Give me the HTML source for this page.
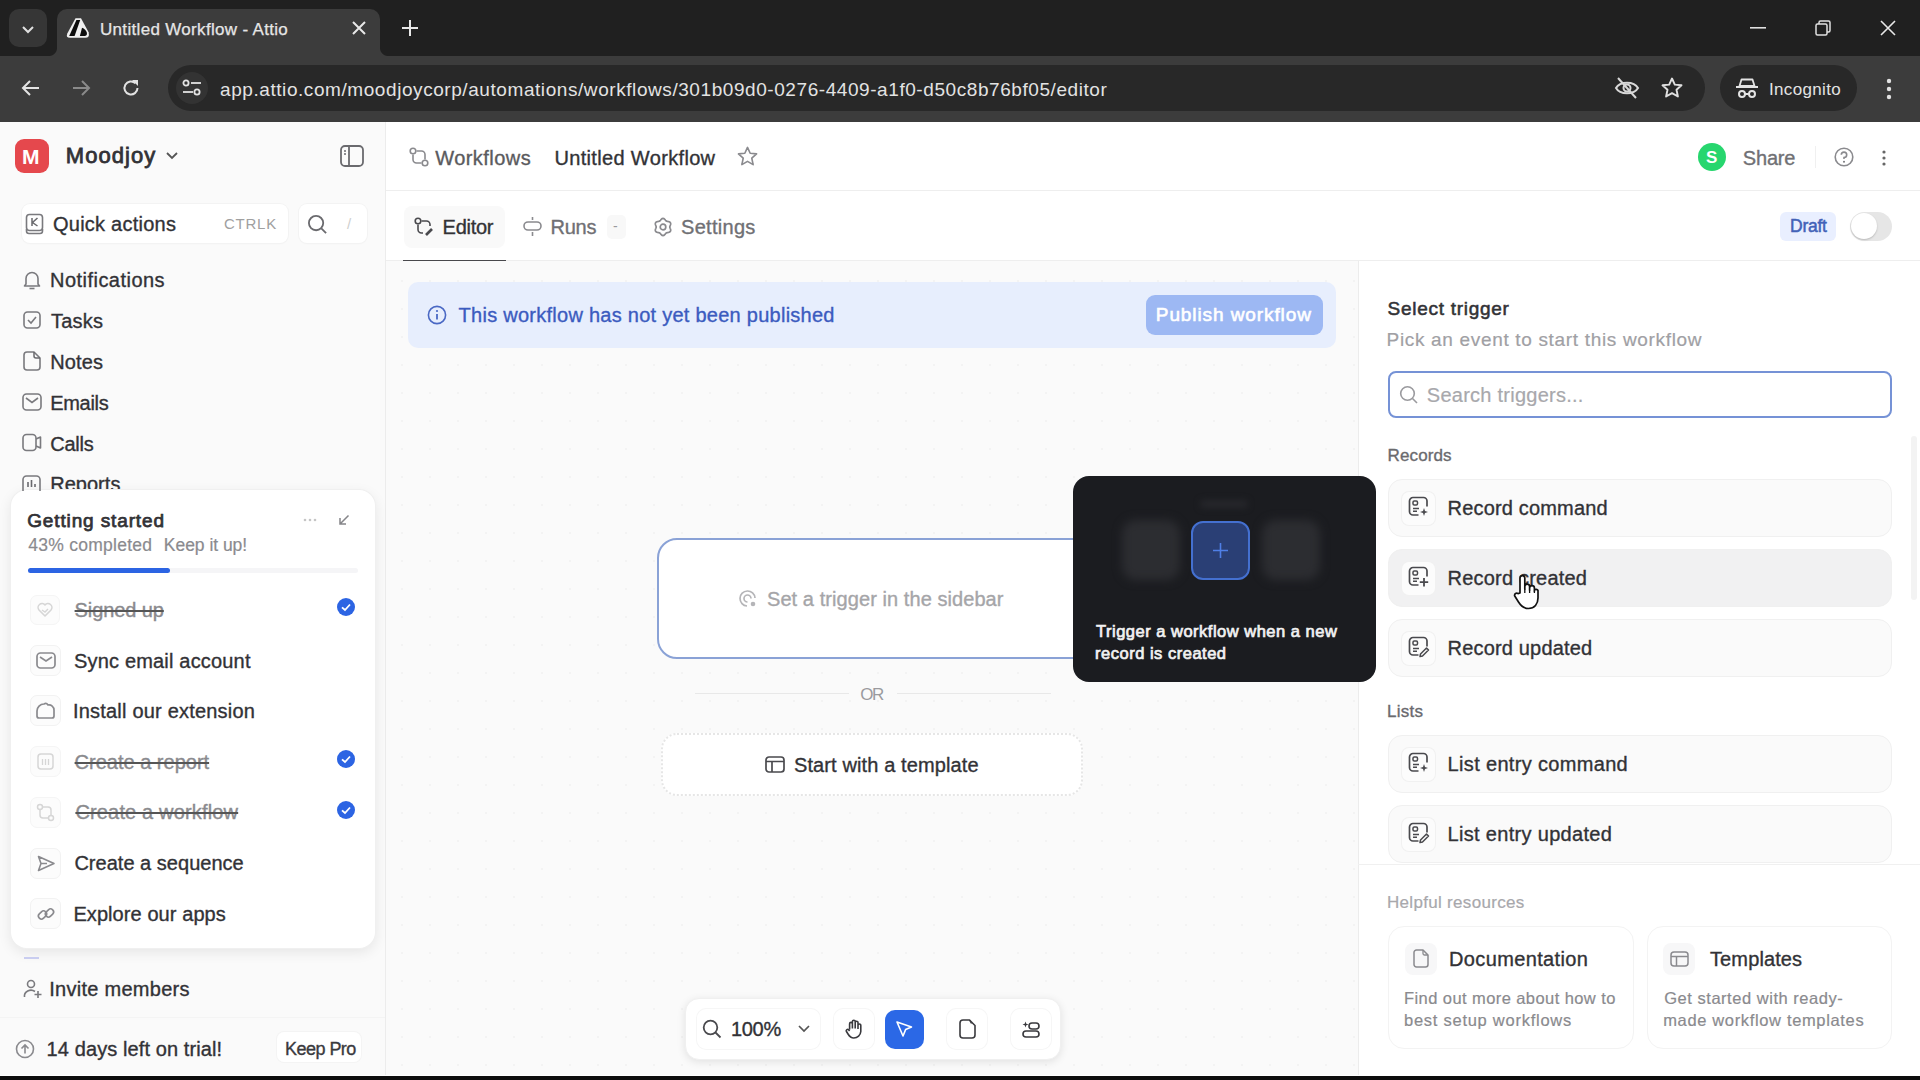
<!DOCTYPE html>
<html><head><meta charset="utf-8">
<style>
*{box-sizing:border-box;margin:0;padding:0}
html,body{width:1920px;height:1080px;overflow:hidden;background:#fff;font-family:"Liberation Sans",sans-serif;color:#323236}
.a{position:absolute}
.t{position:absolute;white-space:nowrap;line-height:1;letter-spacing:0.03em}
.m{-webkit-text-stroke:0.35px currentColor}
.m2{-webkit-text-stroke:0.2px currentColor}
svg{position:absolute;overflow:visible}
</style></head><body>

<!-- ============ BROWSER CHROME ============ -->
<div class="a" style="left:0;top:0;width:1920px;height:56px;background:#202020"></div>
<div class="a" style="left:9px;top:9px;width:38px;height:38px;border-radius:10px;background:#363636"></div>
<div class="a" style="left:57px;top:9px;width:323px;height:48px;border-radius:10px 10px 0 0;background:#3c3c3c"></div>
<div class="a" style="left:49px;top:48px;width:8px;height:8px;background:radial-gradient(circle at 0 0,#202020 7.5px,#3c3c3c 8.5px)"></div>
<div class="a" style="left:380px;top:48px;width:8px;height:8px;background:radial-gradient(circle at 100% 0,#202020 7.5px,#3c3c3c 8.5px)"></div>
<div class="a" style="left:0;top:56px;width:1920px;height:66px;background:#3c3c3c"></div>
<div class="a" style="left:168px;top:65px;width:1537px;height:46px;border-radius:23px;background:#282828"></div>
<div class="a" style="left:1720px;top:65px;width:137px;height:46px;border-radius:23px;background:#282828"></div>
<div class="t" style="left:100.0px;top:21px;font-size:17px;color:#e6e6e6;letter-spacing:0.32px;-webkit-text-stroke:0.25px #e6e6e6">Untitled Workflow - Attio</div>
<div class="t" style="left:220.0px;top:80px;font-size:19px;color:#e3e3e3;letter-spacing:0.57px">app.attio.com/moodjoycorp/automations/workflows/301b09d0-0276-4409-a1f0-d50c8b76bf05/editor</div>
<div class="t" style="left:1769.0px;top:80.5px;font-size:17px;color:#e3e3e3;letter-spacing:0.34px">Incognito</div>


<!-- chrome icons -->
<svg style="left:19px;top:20px" width="18" height="18" viewBox="0 0 18 18"><path d="M4 7 L9 12 L14 7" fill="none" stroke="#e0e0e0" stroke-width="2"/></svg>
<svg style="left:66px;top:17px" width="24" height="22" viewBox="0 0 24 22"><path d="M9.5 1.2 H15 L22.6 15.2 Q24 20.8 19.3 20.8 H4 Q-0.5 20.8 1.3 16.5 Z" fill="#f0f0f0"/><path d="M10.4 3 H14.2 L8.6 18.9 H3.2 Z" fill="#0c0c0c"/><path d="M16 10.8 L13.9 18.9 H19 Q21.5 18.6 20.8 15.5 Q19.8 12.2 16 10.8 Z" fill="#0c0c0c"/></svg>
<svg style="left:352px;top:21px" width="14" height="14" viewBox="0 0 14 14"><path d="M1 1 L13 13 M13 1 L1 13" stroke="#e8e8e8" stroke-width="2"/></svg>
<svg style="left:401px;top:19px" width="18" height="18" viewBox="0 0 18 18"><path d="M9 1 V17 M1 9 H17" stroke="#e8e8e8" stroke-width="2"/></svg>
<svg style="left:1750px;top:27px" width="16" height="2" viewBox="0 0 16 2"><rect width="16" height="1.6" fill="#e0e0e0"/></svg>
<svg style="left:1815px;top:20px" width="16" height="16" viewBox="0 0 16 16"><rect x="1" y="4" width="11" height="11" rx="1.5" fill="none" stroke="#e0e0e0" stroke-width="1.5"/><path d="M4 4 V2.5 A1.5 1.5 0 0 1 5.5 1 H13.5 A1.5 1.5 0 0 1 15 2.5 V10.5 A1.5 1.5 0 0 1 13.5 12 H12" fill="none" stroke="#e0e0e0" stroke-width="1.5"/></svg>
<svg style="left:1880px;top:20px" width="16" height="16" viewBox="0 0 16 16"><path d="M1 1 L15 15 M15 1 L1 15" stroke="#e8e8e8" stroke-width="1.6"/></svg>
<svg style="left:21px;top:79px" width="20" height="18" viewBox="0 0 20 18"><path d="M18 9 H3 M9 2 L2 9 L9 16" fill="none" stroke="#e3e3e3" stroke-width="2"/></svg>
<svg style="left:71px;top:79px" width="20" height="18" viewBox="0 0 20 18"><path d="M2 9 H17 M11 2 L18 9 L11 16" fill="none" stroke="#8a8a8a" stroke-width="2"/></svg>
<svg style="left:121px;top:78px" width="20" height="20" viewBox="0 0 20 20"><path d="M16.5 10 A6.5 6.5 0 1 1 14.5 5.3" fill="none" stroke="#e3e3e3" stroke-width="2"/><path d="M11 2 H17 V8 Z" fill="#e3e3e3"/></svg>
<div class="a" style="left:176px;top:72px;width:32px;height:32px;border-radius:16px;background:#333333"></div>
<svg style="left:182px;top:79px" width="20" height="18" viewBox="0 0 20 18"><circle cx="4" cy="4" r="2.6" fill="none" stroke="#e3e3e3" stroke-width="1.8"/><path d="M9 4 H19" stroke="#e3e3e3" stroke-width="1.8"/><circle cx="15" cy="13" r="2.6" fill="none" stroke="#e3e3e3" stroke-width="1.8"/><path d="M1 13 H11" stroke="#e3e3e3" stroke-width="1.8"/></svg>
<svg style="left:1614px;top:76px" width="26" height="24" viewBox="0 0 26 24"><path d="M2 12 C6 5 20 5 24 12 C20 19 6 19 2 12 Z" fill="none" stroke="#d8d8d8" stroke-width="2"/><circle cx="13" cy="12" r="3.5" fill="none" stroke="#d8d8d8" stroke-width="2"/><path d="M4 2 L22 22" stroke="#d8d8d8" stroke-width="2"/></svg>
<svg style="left:1661px;top:77px" width="22" height="22" viewBox="0 0 22 22"><path d="M11 1.5 L13.8 7.6 L20.5 8.3 L15.5 12.8 L16.9 19.5 L11 16.1 L5.1 19.5 L6.5 12.8 L1.5 8.3 L8.2 7.6 Z" fill="none" stroke="#e0e0e0" stroke-width="1.9" stroke-linejoin="round"/></svg>
<svg style="left:1736px;top:77px" width="22" height="22" viewBox="0 0 22 22"><path d="M5.5 2.5 H16.5 L18.5 9 H3.5 Z" fill="none" stroke="#e3e3e3" stroke-width="1.8" stroke-linejoin="round"/><rect x="0" y="9" width="22" height="2" fill="#e3e3e3"/><circle cx="6" cy="17" r="3" fill="none" stroke="#e3e3e3" stroke-width="2"/><circle cx="16" cy="17" r="3" fill="none" stroke="#e3e3e3" stroke-width="2"/><path d="M9 17 H13" stroke="#e3e3e3" stroke-width="2"/></svg>
<svg style="left:1886px;top:78px" width="6" height="22" viewBox="0 0 6 22"><circle cx="3" cy="3" r="2.2" fill="#e3e3e3"/><circle cx="3" cy="11" r="2.2" fill="#e3e3e3"/><circle cx="3" cy="19" r="2.2" fill="#e3e3e3"/></svg>

<!-- ============ SIDEBAR ============ -->
<div class="a" style="left:0;top:122px;width:386px;height:953px;background:#fafafa;border-right:1px solid #ececec"></div>
<div class="a" style="left:15px;top:139px;width:34px;height:34px;border-radius:9px;background:#e5484d"></div>
<div class="t" style="left:22px;top:146px;font-size:21px;font-weight:bold;color:#fff">M</div>
<div class="t" style="left:65.8px;top:145px;font-size:22px;color:#323236;-webkit-text-stroke:0.8px #323236;letter-spacing:1.05px">Moodjoy</div>

<div class="a" style="left:22px;top:204px;width:266px;height:39px;border-radius:8px;background:#fff;box-shadow:0 0 0 1px #f3f3f3,0 1px 2px rgba(0,0,0,0.03)"></div>
<div class="t m" style="left:53.0px;top:214px;font-size:20px;color:#323236;letter-spacing:0.24px">Quick actions</div>
<div class="t" style="left:224.0px;top:216px;font-size:15px;color:#a0a0a0;letter-spacing:0.75px">CTRLK</div>
<div class="a" style="left:299px;top:204px;width:68px;height:39px;border-radius:8px;background:#fff;box-shadow:0 0 0 1px #f3f3f3,0 1px 2px rgba(0,0,0,0.03)"></div>

<div class="t m" style="left:50.0px;top:270px;font-size:20px;color:#323236;letter-spacing:0.47px">Notifications</div>
<div class="t m" style="left:51.0px;top:311px;font-size:20px;color:#323236;letter-spacing:0.25px">Tasks</div>
<div class="t m" style="left:50.2px;top:352px;font-size:20px;color:#323236;letter-spacing:0.12px">Notes</div>
<div class="t m" style="left:50.2px;top:393px;font-size:20px;color:#323236;letter-spacing:-0.30px">Emails</div>
<div class="t m" style="left:50.2px;top:434px;font-size:20px;color:#323236;letter-spacing:-0.22px">Calls</div>
<div class="t m" style="left:50.2px;top:474px;font-size:20px;color:#323236;letter-spacing:0.03px">Reports</div>

<!-- getting started card -->
<div class="a" style="left:11px;top:490px;width:364px;height:458px;border-radius:16px;background:#fff;box-shadow:0 0 0 1px #f0f0f0,0 4px 14px rgba(0,0,0,0.09)"></div>


<!-- sidebar icons -->
<svg style="left:165px;top:151px" width="14" height="10" viewBox="0 0 14 10"><path d="M2 2 L7 7 L12 2" fill="none" stroke="#555" stroke-width="1.8"/></svg>
<svg style="left:340px;top:145px" width="24" height="22" viewBox="0 0 24 22"><rect x="1" y="1" width="22" height="20" rx="4" fill="none" stroke="#6a6a6e" stroke-width="1.8"/><path d="M9 1 V21" stroke="#6a6a6e" stroke-width="1.8"/><path d="M4 6 H6 M4 9 H6" stroke="#6a6a6e" stroke-width="1.5"/></svg>
<svg style="left:25px;top:213px" width="20" height="22" viewBox="0 0 20 22"><rect x="1.5" y="1.5" width="16" height="16" rx="3" fill="none" stroke="#7a7a7e" stroke-width="1.6"/><path d="M1.5 16 V18 A2.5 2.5 0 0 0 4 20.5 H15 A2.5 2.5 0 0 0 17.5 18 V16" fill="none" stroke="#7a7a7e" stroke-width="1.6"/><path d="M7 5 V13 M12.5 5 L7.5 9.5 L12.5 13" fill="none" stroke="#6a6a6e" stroke-width="1.5"/></svg>
<svg style="left:307px;top:214px" width="21" height="21" viewBox="0 0 22 22"><circle cx="9.5" cy="9.5" r="7.5" fill="none" stroke="#6a6a6e" stroke-width="1.9"/><path d="M15 15 L20 20" stroke="#6a6a6e" stroke-width="1.9"/></svg>
<div class="t" style="left:347px;top:216px;font-size:15px;color:#cfcfcf">/</div>

<svg style="left:23px;top:270px" width="18" height="20" viewBox="0 0 18 20"><path d="M3 14 V8.5 A6 6 0 0 1 15 8.5 V14 L16.5 16 H1.5 Z" fill="none" stroke="#7a7a7e" stroke-width="1.6" stroke-linejoin="round"/><path d="M6.5 18.5 H11.5" stroke="#7a7a7e" stroke-width="1.6"/></svg>
<svg style="left:23px;top:311px" width="18" height="18" viewBox="0 0 18 18"><rect x="1" y="1" width="16" height="16" rx="3.5" fill="none" stroke="#7a7a7e" stroke-width="1.6"/><path d="M5 9 L8 12 L13 6" fill="none" stroke="#7a7a7e" stroke-width="1.6"/></svg>
<svg style="left:23px;top:351px" width="18" height="20" viewBox="0 0 18 20"><path d="M4 1 H11 L17 7 V16 A3 3 0 0 1 14 19 H4 A3 3 0 0 1 1 16 V4 A3 3 0 0 1 4 1 Z" fill="none" stroke="#7a7a7e" stroke-width="1.6" stroke-linejoin="round"/><path d="M11 1 V5 A2 2 0 0 0 13 7 H17" fill="none" stroke="#6a6a6e" stroke-width="1.5"/></svg>
<svg style="left:22px;top:393px" width="20" height="18" viewBox="0 0 20 18"><rect x="1" y="1" width="18" height="16" rx="3.5" fill="none" stroke="#7a7a7e" stroke-width="1.6"/><path d="M4 5 L10 9.5 L16 5" fill="none" stroke="#7a7a7e" stroke-width="1.6"/></svg>
<svg style="left:22px;top:433px" width="20" height="19" viewBox="0 0 20 19"><rect x="1" y="1.5" width="13" height="16" rx="3.5" fill="none" stroke="#7a7a7e" stroke-width="1.6"/><path d="M14 6 L18.5 4 V15 L14 13" fill="none" stroke="#7a7a7e" stroke-width="1.6" stroke-linejoin="round"/></svg>
<svg style="left:22px;top:475px;overflow:hidden" width="20" height="16" viewBox="0 0 20 16"><rect x="1" y="1" width="17" height="20" rx="3.5" fill="none" stroke="#7a7a7e" stroke-width="1.6"/><path d="M6 7 V12 M9.5 5 V12 M13 9 V12" stroke="#6a6a6e" stroke-width="1.6"/></svg>

<div class="t" style="left:27.2px;top:511px;font-size:19px;color:#323236;-webkit-text-stroke:0.75px #323236;letter-spacing:0.87px">Getting started</div>
<div class="t m2" style="left:28.2px;top:536.5px;font-size:17.5px;color:#8a8a8e;letter-spacing:0.27px">43% completed</div>
<div class="t m2" style="left:163.8px;top:536.5px;font-size:17.5px;color:#8a8a8e;letter-spacing:-0.03px">Keep it up!</div>
<svg style="left:303px;top:518px" width="14" height="4" viewBox="0 0 14 4"><circle cx="2" cy="2" r="1.3" fill="#c5c5c5"/><circle cx="7" cy="2" r="1.3" fill="#c5c5c5"/><circle cx="12" cy="2" r="1.3" fill="#c5c5c5"/></svg>
<svg style="left:338px;top:514px" width="12" height="12" viewBox="0 0 12 12"><path d="M10.5 1.5 L2 10 M2 4 V10 H8" fill="none" stroke="#858589" stroke-width="1.5"/></svg>
<div class="a" style="left:28px;top:568px;width:330px;height:5px;border-radius:3px;background:#f5f5f7"></div>
<div class="a" style="left:28px;top:568px;width:142px;height:5px;border-radius:3px;background:#2c64e3"></div>

<!-- items -->
<div class="a" style="left:30px;top:595px;width:30px;height:30px;border-radius:7px;background:#fcfcfc;border:1px solid #f5f5f5"></div>
<svg style="left:37px;top:602px" width="16" height="15" viewBox="0 0 16 15"><path d="M8 14 L2 8 A3.6 3.6 0 0 1 8 3 A3.6 3.6 0 0 1 14 8 Z" fill="none" stroke="#d6d6d6" stroke-width="1.6" stroke-linejoin="round"/><path d="M5 8 L8 10 L11 7" fill="none" stroke="#d6d6d6" stroke-width="1.4"/></svg>
<div class="t m" style="left:74.6px;top:600px;font-size:20px;color:#8a8a8e;text-decoration:line-through;text-decoration-color:#555;letter-spacing:-0.10px">Signed up</div>
<svg style="left:337px;top:598px" width="18" height="18" viewBox="0 0 18 18"><circle cx="9" cy="9" r="9" fill="#2c64e3"/><path d="M5 9.3 L8 12 L13 6.5" fill="none" stroke="#fff" stroke-width="1.8"/></svg>

<div class="a" style="left:30px;top:645px;width:31px;height:31px;border-radius:7px;background:#fcfcfc;border:1px solid #f2f2f2"></div>
<svg style="left:36px;top:652px" width="20" height="17" viewBox="0 0 20 17"><rect x="1" y="1" width="18" height="15" rx="3.5" fill="none" stroke="#8a8a8e" stroke-width="1.7"/><path d="M4 5 L10 9 L16 5" fill="none" stroke="#8a8a8e" stroke-width="1.7"/></svg>
<div class="t m" style="left:74.0px;top:651px;font-size:20px;color:#323236;letter-spacing:0.18px">Sync email account</div>

<div class="a" style="left:30px;top:695px;width:31px;height:31px;border-radius:7px;background:#fcfcfc;border:1px solid #f2f2f2"></div>
<svg style="left:36px;top:702px" width="20" height="18" viewBox="0 0 20 18"><path d="M3 16 A2 2 0 0 1 1 14 V9 A7 7 0 0 1 8 2 A3 3 0 0 1 12 3 A5 5 0 0 1 18 8 V14 A2 2 0 0 1 16 16 Z" fill="none" stroke="#8a8a8e" stroke-width="1.7" stroke-linejoin="round"/></svg>
<div class="t m" style="left:73.0px;top:701px;font-size:20px;color:#323236;letter-spacing:0.20px">Install our extension</div>

<div class="a" style="left:30px;top:746px;width:31px;height:31px;border-radius:7px;background:#fcfcfc;border:1px solid #f5f5f5"></div>
<svg style="left:37px;top:753px" width="17" height="17" viewBox="0 0 17 17"><rect x="1" y="1" width="15" height="15" rx="3" fill="none" stroke="#d6d6d6" stroke-width="1.5"/><path d="M5.5 6 V12 M8.5 6 V12 M11.5 6 V12" stroke="#d6d6d6" stroke-width="1.3"/></svg>
<div class="t m" style="left:74.6px;top:752px;font-size:20px;color:#8a8a8e;text-decoration:line-through;text-decoration-color:#555;letter-spacing:0.00px">Create a report</div>
<svg style="left:337px;top:750px" width="18" height="18" viewBox="0 0 18 18"><circle cx="9" cy="9" r="9" fill="#2c64e3"/><path d="M5 9.3 L8 12 L13 6.5" fill="none" stroke="#fff" stroke-width="1.8"/></svg>

<div class="a" style="left:30px;top:797px;width:31px;height:31px;border-radius:7px;background:#fcfcfc;border:1px solid #f5f5f5"></div>
<svg style="left:36px;top:803px" width="19" height="19" viewBox="0 0 19 19"><circle cx="4" cy="4" r="2.5" fill="none" stroke="#d6d6d6" stroke-width="1.5"/><circle cx="15" cy="15" r="2.5" fill="none" stroke="#d6d6d6" stroke-width="1.5"/><path d="M7 4 H12 A3 3 0 0 1 15 7 V12 M12 15 H7 A3 3 0 0 1 4 12 V7" fill="none" stroke="#d6d6d6" stroke-width="1.5"/></svg>
<div class="t m" style="left:75.4px;top:802px;font-size:20px;color:#8a8a8e;text-decoration:line-through;text-decoration-color:#555;letter-spacing:0.16px">Create a workflow</div>
<svg style="left:337px;top:801px" width="18" height="18" viewBox="0 0 18 18"><circle cx="9" cy="9" r="9" fill="#2c64e3"/><path d="M5 9.3 L8 12 L13 6.5" fill="none" stroke="#fff" stroke-width="1.8"/></svg>

<div class="a" style="left:30px;top:848px;width:31px;height:31px;border-radius:7px;background:#fcfcfc;border:1px solid #f2f2f2"></div>
<svg style="left:37px;top:855px" width="18" height="17" viewBox="0 0 18 17"><path d="M1.5 1.5 L17 8.5 L1.5 15.5 L4 8.5 Z M4 8.5 H10" fill="none" stroke="#8a8a8e" stroke-width="1.6" stroke-linejoin="round"/></svg>
<div class="t m" style="left:74.4px;top:853px;font-size:20px;color:#323236;letter-spacing:0.02px">Create a sequence</div>

<div class="a" style="left:30px;top:898px;width:31px;height:31px;border-radius:7px;background:#fcfcfc;border:1px solid #f2f2f2"></div>
<svg style="left:37px;top:905px" width="18" height="18" viewBox="0 0 18 18"><rect x="1" y="7" width="9" height="6" rx="3" transform="rotate(-45 5.5 10)" fill="none" stroke="#8a8a8e" stroke-width="1.6"/><rect x="8" y="5" width="9" height="6" rx="3" transform="rotate(-45 12.5 8)" fill="none" stroke="#8a8a8e" stroke-width="1.6"/></svg>
<div class="t m" style="left:73.4px;top:904px;font-size:20px;color:#323236;letter-spacing:0.08px">Explore our apps</div>

<div class="a" style="left:24px;top:957px;width:15px;height:2px;background:#c9cdf0"></div>
<svg style="left:23px;top:979px" width="20" height="20" viewBox="0 0 20 20"><circle cx="8" cy="5" r="3.5" fill="none" stroke="#7a7a7e" stroke-width="1.6"/><path d="M1.5 18 A6.5 6 0 0 1 12 12.5" fill="none" stroke="#7a7a7e" stroke-width="1.6"/><path d="M15 12 V19 M11.5 15.5 H18.5" stroke="#7a7a7e" stroke-width="1.6"/></svg>
<div class="t m" style="left:49.2px;top:979px;font-size:20px;color:#323236;letter-spacing:0.28px">Invite members</div>
<div class="a" style="left:0;top:1017px;width:385px;height:1px;background:#f4f4f4"></div>
<svg style="left:15px;top:1039px" width="20" height="20" viewBox="0 0 20 20"><circle cx="10" cy="10" r="8.5" fill="none" stroke="#8a8a8e" stroke-width="1.6"/><path d="M10 14.5 V6 M6.5 9.5 L10 6 L13.5 9.5" fill="none" stroke="#8a8a8e" stroke-width="1.6"/></svg>
<div class="t m" style="left:46.6px;top:1039px;font-size:20px;color:#323236;letter-spacing:0.10px">14 days left on trial!</div>
<div class="a" style="left:277px;top:1032px;width:84px;height:30px;border-radius:7px;background:#fff;box-shadow:0 0 0 1px #f4f4f4"></div>
<div class="t m" style="left:285.0px;top:1040px;font-size:18px;color:#3a3a3e;letter-spacing:-0.53px">Keep Pro</div>

<!-- ============ MAIN HEADER ============ -->
<div class="a" style="left:386px;top:190px;width:1534px;height:1px;background:#eeeeee"></div>
<div class="t m" style="left:435.2px;top:148px;font-size:20px;color:#5a5a5e;letter-spacing:0.46px">Workflows</div>
<div class="t m" style="left:554.4px;top:148px;font-size:20px;color:#323236;letter-spacing:0.34px">Untitled Workflow</div>
<div class="t m" style="left:1742.8px;top:148px;font-size:20px;color:#707074;letter-spacing:-0.18px">Share</div>
<div class="a" style="left:386px;top:260px;width:1534px;height:1px;background:#eeeeee"></div>
<div class="t m" style="left:550.6px;top:217px;font-size:20px;color:#707074;letter-spacing:-0.30px">Runs</div>
<div class="t m" style="left:681.0px;top:217px;font-size:20px;color:#707074;letter-spacing:0.29px">Settings</div>


<svg style="left:409px;top:147px" width="20" height="20" viewBox="0 0 20 20"><circle cx="4" cy="4" r="2.8" fill="none" stroke="#8a8a8e" stroke-width="1.6"/><circle cx="16" cy="16" r="2.8" fill="none" stroke="#8a8a8e" stroke-width="1.6"/><path d="M7.5 4 H12.5 A3.5 3.5 0 0 1 16 7.5 V12.5 M12.5 16 H7.5 A3.5 3.5 0 0 1 4 12.5 V7.5" fill="none" stroke="#8a8a8e" stroke-width="1.6"/></svg>
<svg style="left:737px;top:146px" width="21" height="21" viewBox="0 0 22 22"><path d="M11 1.5 L13.8 7.6 L20.5 8.3 L15.5 12.8 L16.9 19.5 L11 16.1 L5.1 19.5 L6.5 12.8 L1.5 8.3 L8.2 7.6 Z" fill="none" stroke="#8a8a8e" stroke-width="1.7" stroke-linejoin="round"/></svg>
<div class="a" style="left:1698px;top:143px;width:28px;height:28px;border-radius:14px;background:#27d66e"></div>
<div class="t" style="left:1706px;top:149px;font-size:17px;font-weight:bold;color:#fff">S</div>
<div class="a" style="left:1815px;top:146px;width:1px;height:22px;background:#f0f0f0"></div>
<svg style="left:1834px;top:147px" width="20" height="20" viewBox="0 0 20 20"><circle cx="10" cy="10" r="8.8" fill="none" stroke="#8a8a8e" stroke-width="1.6"/><path d="M7.3 7.8 A2.7 2.7 0 1 1 10 10.5 V12" fill="none" stroke="#8a8a8e" stroke-width="1.6"/><circle cx="10" cy="14.8" r="1" fill="#77777b"/></svg>
<svg style="left:1881px;top:149px" width="6" height="18" viewBox="0 0 6 18"><circle cx="3" cy="3" r="1.6" fill="#666"/><circle cx="3" cy="9" r="1.6" fill="#666"/><circle cx="3" cy="15" r="1.6" fill="#666"/></svg>

<div class="a" style="left:404px;top:206px;width:101px;height:42px;border-radius:8px;background:#f9f9f9"></div>
<div class="a" style="left:403px;top:260px;width:103px;height:2px;background:#48484c"></div>
<div class="t m" style="left:442.6px;top:217px;font-size:20px;color:#323236;letter-spacing:-0.28px">Editor</div>
<svg style="left:414px;top:217px" width="20" height="20" viewBox="0 0 20 20"><circle cx="4" cy="4" r="2.8" fill="none" stroke="#4a4a4e" stroke-width="1.6"/><path d="M7.5 4 H12.5 A3.5 3.5 0 0 1 16 7.5 V9 M9 16 H7.5 A3.5 3.5 0 0 1 4 12.5 V7.5" fill="none" stroke="#4a4a4e" stroke-width="1.6"/><path d="M12 18 L18 12" stroke="#4a4a4e" stroke-width="2.6"/></svg>
<svg style="left:523px;top:216px" width="19" height="21" viewBox="0 0 19 21"><path d="M9.5 1 V4 M9.5 16 V20" stroke="#8a8a8e" stroke-width="1.6"/><rect x="1" y="6" width="17" height="8" rx="4" fill="none" stroke="#8a8a8e" stroke-width="1.6"/></svg>
<div class="a" style="left:607px;top:215px;width:19px;height:24px;border-radius:5px;background:#f8f8f8"></div>
<div class="t" style="left:613px;top:219px;font-size:14px;color:#9a9a9e">-</div>
<svg style="left:653px;top:217px" width="20" height="20" viewBox="0 0 20 20"><path d="M10.00 1.40 L10.74 1.55 L11.42 1.97 L11.99 2.56 L12.48 3.19 L12.92 3.73 L13.40 4.11 L13.97 4.33 L14.66 4.45 L15.44 4.56 L16.24 4.76 L16.95 5.14 L17.45 5.70 L17.68 6.42 L17.66 7.21 L17.44 8.01 L17.14 8.74 L16.89 9.40 L16.80 10.00 L16.89 10.60 L17.14 11.26 L17.44 11.99 L17.66 12.79 L17.68 13.58 L17.45 14.30 L16.95 14.86 L16.24 15.24 L15.44 15.44 L14.66 15.55 L13.97 15.67 L13.40 15.89 L12.92 16.27 L12.48 16.81 L11.99 17.44 L11.42 18.03 L10.74 18.45 L10.00 18.60 L9.26 18.45 L8.58 18.03 L8.01 17.44 L7.52 16.81 L7.08 16.27 L6.60 15.89 L6.03 15.67 L5.34 15.55 L4.56 15.44 L3.76 15.24 L3.05 14.86 L2.55 14.30 L2.32 13.58 L2.34 12.79 L2.56 11.99 L2.86 11.26 L3.11 10.60 L3.20 10.00 L3.11 9.40 L2.86 8.74 L2.56 8.01 L2.34 7.21 L2.32 6.42 L2.55 5.70 L3.05 5.14 L3.76 4.76 L4.56 4.56 L5.34 4.45 L6.03 4.33 L6.60 4.11 L7.08 3.73 L7.52 3.19 L8.01 2.56 L8.58 1.97 L9.26 1.55 Z" fill="none" stroke="#8a8a8e" stroke-width="1.7" stroke-linejoin="round"/><circle cx="10" cy="10" r="2.8" fill="none" stroke="#8a8a8e" stroke-width="1.7"/></svg>
<div class="a" style="left:1780px;top:212px;width:56px;height:29px;border-radius:6px;background:#e9efff"></div>
<div class="t" style="left:1790.0px;top:218px;font-size:17.5px;color:#4262b8;-webkit-text-stroke:0.5px #4262b8;letter-spacing:-0.25px">Draft</div>
<div class="a" style="left:1850px;top:212px;width:42px;height:29px;border-radius:15px;background:#e6e6e6"></div>
<div class="a" style="left:1851px;top:213px;width:26px;height:26px;border-radius:13px;background:#fff;box-shadow:0 1px 2px rgba(0,0,0,0.2)"></div>

<!-- ============ CANVAS ============ -->

<div class="a" style="left:386px;top:261px;width:972px;height:814px;background-color:#fafafa;background-image:radial-gradient(circle,#f3f3f3 1px,transparent 1.4px);background-size:28px 28px;background-position:2px 6px"></div>
<div class="a" style="left:408px;top:282px;width:928px;height:66px;border-radius:10px;background:#e7eefd"></div>
<svg style="left:427px;top:305px" width="20" height="20" viewBox="0 0 20 20"><circle cx="10" cy="10" r="8.6" fill="none" stroke="#4a68c4" stroke-width="1.6"/><path d="M10 9 V14.5" stroke="#4a68c4" stroke-width="1.8"/><circle cx="10" cy="6" r="1.1" fill="#4a68c4"/></svg>
<div class="t m" style="left:458.6px;top:305px;font-size:20px;color:#3b5bbf;letter-spacing:0.26px">This workflow has not yet been published</div>
<div class="a" style="left:1146px;top:295px;width:177px;height:40px;border-radius:9px;background:#9db8f3"></div>
<div class="t" style="left:1155.8px;top:305px;font-size:19px;color:#fff;-webkit-text-stroke:0.6px #fff;letter-spacing:0.91px">Publish workflow</div>

<div class="a" style="left:657px;top:538px;width:440px;height:121px;border-radius:20px;background:#fff;border:2px solid #8aa2d6"></div>
<svg style="left:738px;top:589px" width="20" height="20" viewBox="0 0 20 20"><path d="M17 9 A7.5 7.5 0 1 0 9 17" fill="none" stroke="#b5b5b8" stroke-width="1.7"/><path d="M13 9.5 A3.5 3.5 0 1 0 9.5 13" fill="none" stroke="#b5b5b8" stroke-width="1.7"/><circle cx="15" cy="15" r="2.3" fill="#b5b5b8"/></svg>
<div class="t m" style="left:767.0px;top:589px;font-size:20px;color:#a5a5a8;letter-spacing:0.07px">Set a trigger in the sidebar</div>

<div class="a" style="left:695px;top:693px;width:154px;height:1px;background:#e8e8e8"></div>
<div class="a" style="left:897px;top:693px;width:154px;height:1px;background:#e8e8e8"></div>
<div class="t" style="left:860.2px;top:686px;font-size:17px;color:#9a9a9e;letter-spacing:-1.30px">OR</div>

<div class="a" style="left:661px;top:733px;width:422px;height:63px;border-radius:16px;background:#fff;border:2px dotted #e6e6e6"></div>
<svg style="left:765px;top:756px" width="20" height="17" viewBox="0 0 20 17"><rect x="1" y="1" width="18" height="15" rx="3" fill="none" stroke="#4a4a4e" stroke-width="1.7"/><path d="M1 5.5 H19 M7 5.5 V16" stroke="#4a4a4e" stroke-width="1.7"/></svg>
<div class="t m" style="left:794.0px;top:755px;font-size:20px;color:#323236;letter-spacing:0.11px">Start with a template</div>

<!-- bottom toolbar -->
<div class="a" style="left:685px;top:998px;width:376px;height:62px;border-radius:14px;background:#fff;box-shadow:0 2px 8px rgba(0,0,0,0.10);border:1px solid #f0f0f0"></div>
<div class="a" style="left:697px;top:1009px;width:123px;height:40px;border-radius:9px;background:#fff;box-shadow:0 0 0 1px #f6f6f6"></div>
<div class="a" style="left:834px;top:1009px;width:40px;height:40px;border-radius:9px;background:#fff;box-shadow:0 0 0 1px #f6f6f6"></div>
<div class="a" style="left:947px;top:1009px;width:40px;height:40px;border-radius:9px;background:#fff;box-shadow:0 0 0 1px #f6f6f6"></div>
<div class="a" style="left:1011px;top:1009px;width:40px;height:40px;border-radius:9px;background:#fff;box-shadow:0 0 0 1px #f6f6f6"></div>
<svg style="left:702px;top:1019px" width="20" height="20" viewBox="0 0 20 20"><circle cx="8.5" cy="8.5" r="6.8" fill="none" stroke="#4a4a4e" stroke-width="1.8"/><path d="M13.5 13.5 L18.5 18.5" stroke="#4a4a4e" stroke-width="1.8"/></svg>
<div class="t m" style="left:731.0px;top:1019px;font-size:20px;color:#323236;letter-spacing:-0.33px">100%</div>
<svg style="left:797px;top:1024px" width="14" height="9" viewBox="0 0 14 9"><path d="M2 2 L7 7 L12 2" fill="none" stroke="#555" stroke-width="1.7"/></svg>
<svg style="left:845px;top:1019px" width="19" height="20" viewBox="0 0 19 20"><path d="M4.6 10.5 V4.8 A1.4 1.4 0 0 1 7.4 4.8 V9.5 M7.4 9 V2.6 A1.4 1.4 0 0 1 10.2 2.6 V9.5 M10.2 9.5 V3.6 A1.4 1.4 0 0 1 13 3.6 V10 M13 10 V6.4 A1.4 1.4 0 0 1 15.8 6.4 V12.5 A7 7 0 0 1 8.8 19 C6.2 19 4.5 17.5 3 15 L1.3 12.3 A1.4 1.4 0 0 1 3.6 10.8 L4.6 12" fill="none" stroke="#3a3a3e" stroke-width="1.6" stroke-linejoin="round"/></svg>
<div class="a" style="left:885px;top:1010px;width:39px;height:39px;border-radius:10px;background:#2b68e6"></div>
<svg style="left:896px;top:1021px" width="17" height="17" viewBox="0 0 17 17"><path d="M1 1 L15.5 6 L9.6 8.6 L7 15 Z" fill="none" stroke="#fff" stroke-width="1.6" stroke-linejoin="round"/></svg>
<svg style="left:959px;top:1019px" width="17" height="20" viewBox="0 0 17 20"><path d="M4 1 H10.5 L16 6.5 V16 A3 3 0 0 1 13 19 H4 A3 3 0 0 1 1 16 V4 A3 3 0 0 1 4 1 Z" fill="none" stroke="#3a3a3e" stroke-width="1.6" stroke-linejoin="round"/><path d="M10.5 1 L12.5 4.5" fill="none" stroke="#3a3a3e" stroke-width="1.3"/></svg>
<svg style="left:1022px;top:1021px" width="18" height="17" viewBox="0 0 18 17"><rect x="1" y="10" width="16" height="6" rx="3" fill="none" stroke="#3a3a3e" stroke-width="1.6"/><rect x="7" y="2" width="10" height="6" rx="3" fill="none" stroke="#3a3a3e" stroke-width="1.6"/><path d="M3.5 0.5 L4.3 2.7 L6.5 3.5 L4.3 4.3 L3.5 6.5 L2.7 4.3 L0.5 3.5 L2.7 2.7 Z" fill="#3a3a3e"/></svg>

<!-- ============ RIGHT PANEL ============ -->
<div class="a" style="left:1358px;top:261px;width:562px;height:814px;background:#fff;border-left:1px solid #ececec"></div>
<div class="t" style="left:1387.6px;top:299px;font-size:19px;color:#323236;-webkit-text-stroke:0.55px #323236;letter-spacing:0.72px">Select trigger</div>
<div class="t m2" style="left:1386.6px;top:330px;font-size:19px;color:#a0a0a4;letter-spacing:0.67px">Pick an event to start this workflow</div>
<div class="a" style="left:1388px;top:371px;width:504px;height:47px;border-radius:8px;background:#fff;border:2px solid #7592d6"></div>
<svg style="left:1399px;top:385px" width="20" height="20" viewBox="0 0 20 20"><circle cx="8.5" cy="8.5" r="6.8" fill="none" stroke="#9a9a9e" stroke-width="1.6"/><path d="M13.5 13.5 L18 18" stroke="#9a9a9e" stroke-width="1.6"/></svg>
<div class="t m2" style="left:1426.8px;top:385px;font-size:20px;color:#a8a8ac;letter-spacing:0.25px">Search triggers...</div>
<div class="t m" style="left:1387.6px;top:447px;font-size:17px;color:#6a6a6e;letter-spacing:0.10px">Records</div>
<div class="t m" style="left:1387.0px;top:703px;font-size:17px;color:#6a6a6e;letter-spacing:0.25px">Lists</div>
<div class="t m2" style="left:1387.0px;top:894px;font-size:17px;color:#a8a8ac;letter-spacing:0.31px">Helpful resources</div>
<div class="a" style="left:1358px;top:864px;width:562px;height:1px;background:#f0f0f0"></div>
<div class="a" style="left:1388px;top:479px;width:504px;height:58px;border-radius:14px;background:#fafafa;border:1px solid #f0f0f0"></div>
<div class="a" style="left:1402px;top:492px;width:33px;height:33px;border-radius:7px;background:#fcfcfc;box-shadow:0 0 0 1px #f1f1f1"></div>
<svg style="left:1408px;top:496px" width="21" height="21" viewBox="0 0 21 21"><path d="M10.5 19 H5 A3.5 3.5 0 0 1 1.5 15.5 V5 A3.5 3.5 0 0 1 5 1.5 H15.5 A3.5 3.5 0 0 1 19 5 V10.5" fill="none" stroke="#4a4a4e" stroke-width="1.7"/><rect x="5" y="5" width="4.5" height="4" rx="1.2" fill="none" stroke="#4a4a4e" stroke-width="1.5"/><path d="M5 12.5 H11 M5 15.3 H9" stroke="#4a4a4e" stroke-width="1.5"/><path d="M16 12 L17 15 L20 16 L17 17 L16 20 L15 17 L12 16 L15 15 Z" fill="#4a4a4e"/></svg>
<div class="t m" style="left:1447.6px;top:498px;font-size:20px;color:#323236;letter-spacing:0.17px">Record command</div>
<div class="a" style="left:1388px;top:549px;width:504px;height:58px;border-radius:14px;background:#f1f1f2;border:1px solid #f0f0f0"></div>
<div class="a" style="left:1402px;top:562px;width:33px;height:33px;border-radius:7px;background:#fcfcfc;box-shadow:0 0 0 1px #f1f1f1"></div>
<svg style="left:1408px;top:566px" width="21" height="21" viewBox="0 0 21 21"><path d="M10.5 19 H5 A3.5 3.5 0 0 1 1.5 15.5 V5 A3.5 3.5 0 0 1 5 1.5 H15.5 A3.5 3.5 0 0 1 19 5 V10.5" fill="none" stroke="#4a4a4e" stroke-width="1.7"/><rect x="5" y="5" width="4.5" height="4" rx="1.2" fill="none" stroke="#4a4a4e" stroke-width="1.5"/><path d="M5 12.5 H11 M5 15.3 H9" stroke="#4a4a4e" stroke-width="1.5"/><path d="M16 12 V20.5 M11.8 16.2 H20.2" stroke="#4a4a4e" stroke-width="1.8"/></svg>
<div class="t m" style="left:1447.6px;top:568px;font-size:20px;color:#323236;letter-spacing:0.20px">Record created</div>
<div class="a" style="left:1388px;top:619px;width:504px;height:58px;border-radius:14px;background:#fafafa;border:1px solid #f0f0f0"></div>
<div class="a" style="left:1402px;top:632px;width:33px;height:33px;border-radius:7px;background:#fcfcfc;box-shadow:0 0 0 1px #f1f1f1"></div>
<svg style="left:1408px;top:636px" width="21" height="21" viewBox="0 0 21 21"><path d="M10.5 19 H5 A3.5 3.5 0 0 1 1.5 15.5 V5 A3.5 3.5 0 0 1 5 1.5 H15.5 A3.5 3.5 0 0 1 19 5 V10.5" fill="none" stroke="#4a4a4e" stroke-width="1.7"/><rect x="5" y="5" width="4.5" height="4" rx="1.2" fill="none" stroke="#4a4a4e" stroke-width="1.5"/><path d="M5 12.5 H11 M5 15.3 H9" stroke="#4a4a4e" stroke-width="1.5"/><path d="M12 20.5 L12.5 18 L18.5 12 L20.5 14 L14.5 20 Z" fill="none" stroke="#4a4a4e" stroke-width="1.5" stroke-linejoin="round"/></svg>
<div class="t m" style="left:1447.6px;top:638px;font-size:20px;color:#323236;letter-spacing:0.17px">Record updated</div>
<div class="a" style="left:1388px;top:735px;width:504px;height:58px;border-radius:14px;background:#fafafa;border:1px solid #f0f0f0"></div>
<div class="a" style="left:1402px;top:748px;width:33px;height:33px;border-radius:7px;background:#fcfcfc;box-shadow:0 0 0 1px #f1f1f1"></div>
<svg style="left:1408px;top:752px" width="21" height="21" viewBox="0 0 21 21"><path d="M10.5 19 H5 A3.5 3.5 0 0 1 1.5 15.5 V5 A3.5 3.5 0 0 1 5 1.5 H15.5 A3.5 3.5 0 0 1 19 5 V10.5" fill="none" stroke="#4a4a4e" stroke-width="1.7"/><rect x="5" y="5" width="4.5" height="4" rx="1.2" fill="none" stroke="#4a4a4e" stroke-width="1.5"/><path d="M5 12.5 H11 M5 15.3 H9" stroke="#4a4a4e" stroke-width="1.5"/><path d="M16 12 L17 15 L20 16 L17 17 L16 20 L15 17 L12 16 L15 15 Z" fill="#4a4a4e"/></svg>
<div class="t m" style="left:1447.6px;top:754px;font-size:20px;color:#323236;letter-spacing:0.33px">List entry command</div>
<div class="a" style="left:1388px;top:805px;width:504px;height:58px;border-radius:14px;background:#fafafa;border:1px solid #f0f0f0"></div>
<div class="a" style="left:1402px;top:818px;width:33px;height:33px;border-radius:7px;background:#fcfcfc;box-shadow:0 0 0 1px #f1f1f1"></div>
<svg style="left:1408px;top:822px" width="21" height="21" viewBox="0 0 21 21"><path d="M10.5 19 H5 A3.5 3.5 0 0 1 1.5 15.5 V5 A3.5 3.5 0 0 1 5 1.5 H15.5 A3.5 3.5 0 0 1 19 5 V10.5" fill="none" stroke="#4a4a4e" stroke-width="1.7"/><rect x="5" y="5" width="4.5" height="4" rx="1.2" fill="none" stroke="#4a4a4e" stroke-width="1.5"/><path d="M5 12.5 H11 M5 15.3 H9" stroke="#4a4a4e" stroke-width="1.5"/><path d="M12 20.5 L12.5 18 L18.5 12 L20.5 14 L14.5 20 Z" fill="none" stroke="#4a4a4e" stroke-width="1.5" stroke-linejoin="round"/></svg>
<div class="t m" style="left:1447.6px;top:824px;font-size:20px;color:#323236;letter-spacing:0.31px">List entry updated</div>

<div class="a" style="left:1388px;top:926px;width:246px;height:123px;border-radius:16px;background:#fff;border:1px solid #f3f3f3"></div>
<div class="a" style="left:1647px;top:926px;width:245px;height:123px;border-radius:16px;background:#fff;border:1px solid #f3f3f3"></div>
<div class="a" style="left:1405px;top:943px;width:32px;height:32px;border-radius:8px;background:#f7f7f8"></div>
<svg style="left:1413px;top:949px" width="16" height="19" viewBox="0 0 16 19"><path d="M3.5 1 H10 L15 6 V15.5 A2.5 2.5 0 0 1 12.5 18 H3.5 A2.5 2.5 0 0 1 1 15.5 V3.5 A2.5 2.5 0 0 1 3.5 1 Z" fill="none" stroke="#8a8a8e" stroke-width="1.5" stroke-linejoin="round"/><path d="M10 1 V4.5 A1.5 1.5 0 0 0 11.5 6 H15" fill="none" stroke="#8a8a8e" stroke-width="1.3"/></svg>
<div class="t m" style="left:1449.0px;top:949px;font-size:20px;color:#323236;letter-spacing:0.37px">Documentation</div>
<div class="t m2" style="left:1404.0px;top:990px;font-size:16.5px;color:#8a8a8e;letter-spacing:0.42px">Find out more about how to</div>
<div class="t m2" style="left:1404.0px;top:1012px;font-size:16.5px;color:#8a8a8e;letter-spacing:0.74px">best setup workflows</div>
<div class="a" style="left:1663px;top:943px;width:32px;height:32px;border-radius:8px;background:#f7f7f8"></div>
<svg style="left:1670px;top:951px" width="19" height="16" viewBox="0 0 19 16"><rect x="1" y="1" width="17" height="14" rx="3" fill="none" stroke="#8a8a8e" stroke-width="1.5"/><path d="M1 5.5 H18 M6.5 5.5 V15" stroke="#8a8a8e" stroke-width="1.5"/></svg>
<div class="t m" style="left:1710.0px;top:949px;font-size:20px;color:#323236;letter-spacing:0.12px">Templates</div>
<div class="t m2" style="left:1664.2px;top:990px;font-size:16.5px;color:#8a8a8e;letter-spacing:0.53px">Get started with ready-</div>
<div class="t m2" style="left:1663.2px;top:1012px;font-size:16.5px;color:#8a8a8e;letter-spacing:0.65px">made workflow templates</div>

<div class="a" style="left:1911px;top:436px;width:6px;height:164px;border-radius:3px;background:#f3f3f3"></div>
<!-- cursor -->
<svg style="left:1513px;top:574px" width="26" height="36" viewBox="0 0 26 36"><path d="M7 19 V4 A2.4 2.4 0 0 1 11.8 4 V15 V12.6 A2.4 2.4 0 0 1 16.6 12.6 V16 V14 A2.4 2.4 0 0 1 21.4 14 V17 V16 A2.2 2.2 0 0 1 25 16.5 V24 C25 30 21.5 34.5 15.5 34.5 C10.5 34.5 8 32 5.5 28 L1.6 21.8 A2.2 2.2 0 0 1 5 19.6 Z" fill="#fff" stroke="#111" stroke-width="1.7" stroke-linejoin="round"/><path d="M11.8 15 V19 M16.6 16 V19 M21.4 17 V19" stroke="#111" stroke-width="1.3"/></svg>


<!-- tooltip -->
<div class="a" style="left:1073px;top:476px;width:303px;height:206px;border-radius:16px;background:#1b1c20;overflow:hidden">
  <div class="a" style="left:127px;top:24px;width:48px;height:8px;border-radius:4px;background:#26272b;filter:blur(3px)"></div>
  <div class="a" style="left:49px;top:44px;width:58px;height:60px;border-radius:14px;background:#2c2d31;filter:blur(5px)"></div>
  <div class="a" style="left:189px;top:44px;width:58px;height:60px;border-radius:14px;background:#2c2d31;filter:blur(5px)"></div>
  <div class="a" style="left:118px;top:45px;width:59px;height:59px;border-radius:12px;background:#2a3f75;border:2px solid #4470d0"></div>
  <svg style="left:139px;top:66px" width="17" height="17" viewBox="0 0 17 17"><path d="M8.5 1 V16 M1 8.5 H16" stroke="#4f7fe6" stroke-width="1.6"/></svg>
  <div class="t" style="left:23.0px;top:147px;font-size:16.5px;color:#f2f2f2;-webkit-text-stroke:0.7px #f2f2f2;letter-spacing:0.50px">Trigger a workflow when a new</div>
  <div class="t" style="left:22.0px;top:169px;font-size:16.5px;color:#f2f2f2;-webkit-text-stroke:0.7px #f2f2f2;letter-spacing:0.51px">record is created</div>
</div>

<div class="a" style="left:0;top:1076px;width:1920px;height:4px;background:#0d0d0d"></div>
</body></html>
